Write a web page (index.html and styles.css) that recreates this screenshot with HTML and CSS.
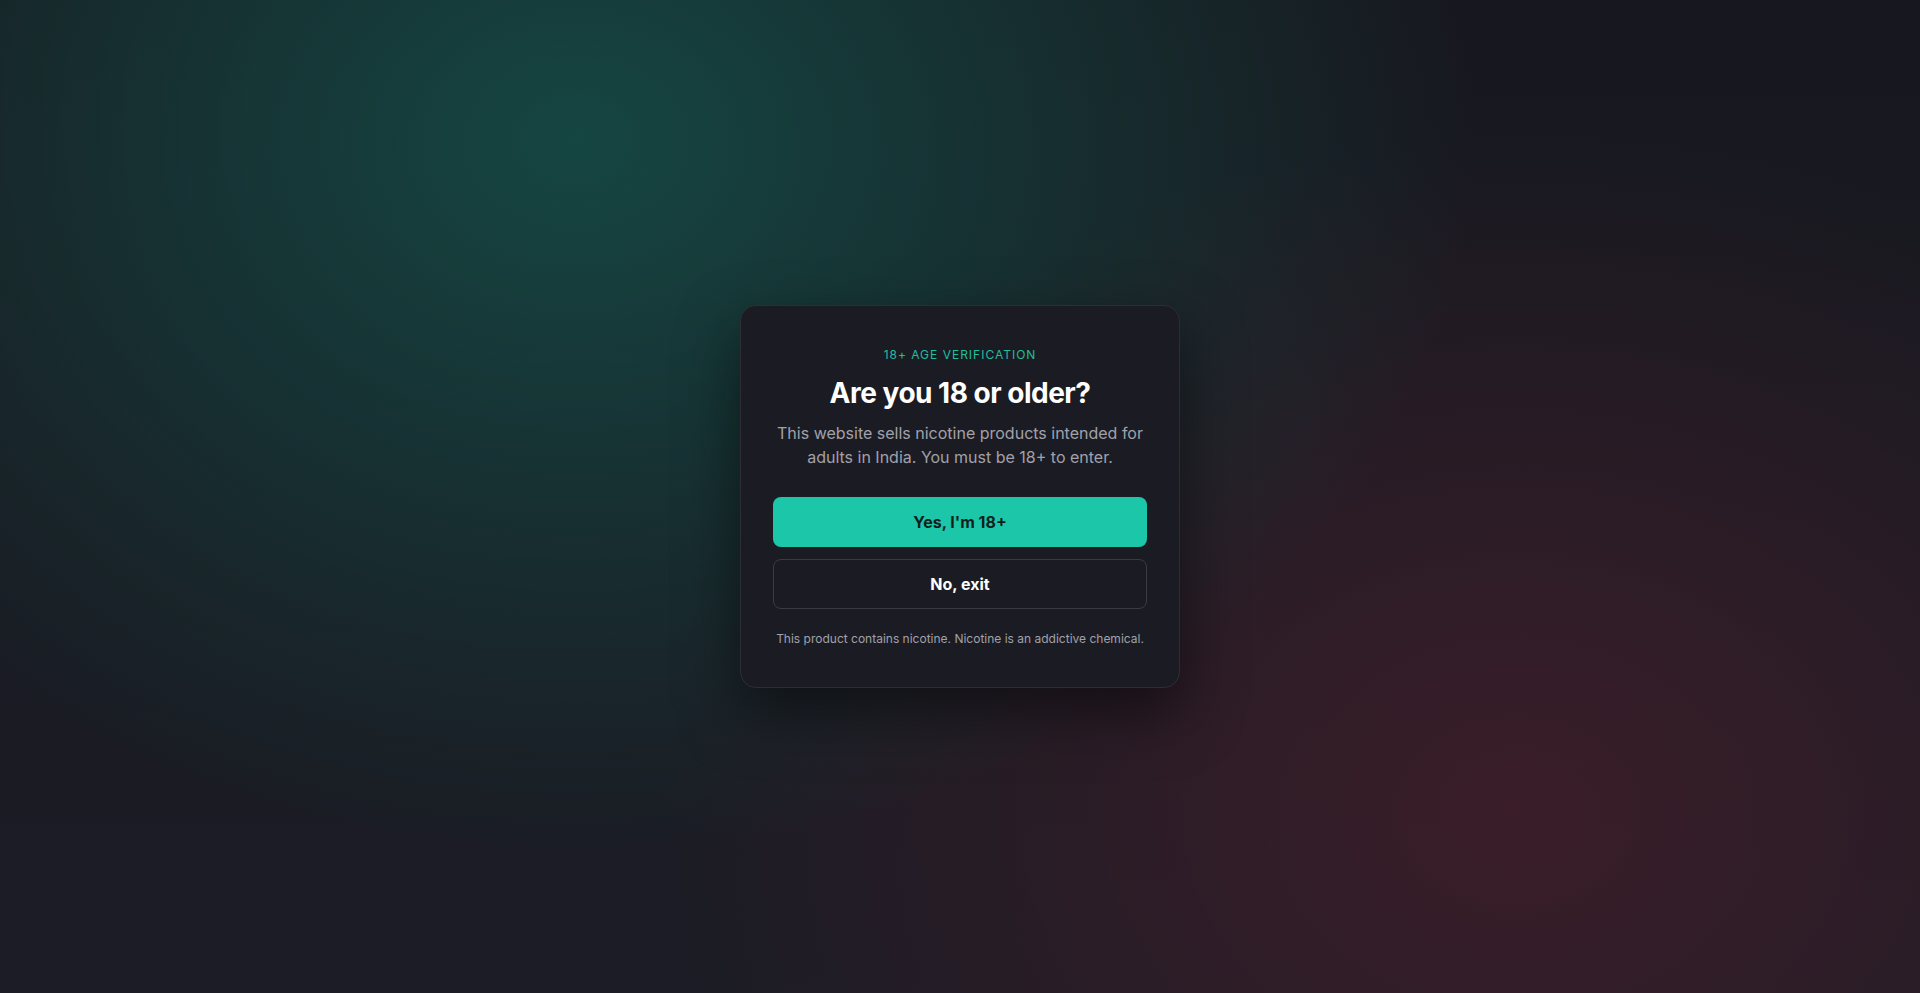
FILE: index.html
```html
<!DOCTYPE html>
<html lang="en">
<head>
<meta charset="utf-8">
<title>Age Verification</title>
<link rel="stylesheet" href="styles.css">
</head>
<body>
<main class="overlay">
  <section class="card">
    <p class="eyebrow">18+ AGE VERIFICATION</p>
    <h1 class="title">Are you 18 or older?</h1>
    <p class="lead">This website sells nicotine products intended for adults in India. You must be 18+ to enter.</p>
    <div class="actions">
      <button class="btn btn-primary" type="button">Yes, I'm 18+</button>
      <button class="btn btn-ghost" type="button">No, exit</button>
    </div>
    <p class="warning">This product contains nicotine. Nicotine is an addictive chemical.</p>
  </section>
</main>
</body>
</html>
```

FILE: styles.css
```css
* { box-sizing: border-box; }
html, body { height: 100%; }
body {
  margin: 0;
  font-family: Inter, "Noto Sans", sans-serif;
  color: #f4f4f5;
  background-color: #181922;
  background-image:
    radial-gradient(ellipse 1250px 1000px at 30% 14%, rgba(21, 78, 72, 0.85), rgba(21, 78, 72, 0) 72%),
    radial-gradient(ellipse 1200px 950px at 79% 82%, rgba(64, 30, 42, 0.85), rgba(64, 30, 42, 0) 72%),
    linear-gradient(180deg, #17181f, #1b1c25);
}
.overlay {
  min-height: 100vh;
  display: flex;
  align-items: center;
  justify-content: center;
}
.card {
  width: 440px;
  padding: 40px 32px 39px;
  background: #1b1c23;
  border: 1px solid #2c2d35;
  border-radius: 16px;
  box-shadow: 0 24px 60px rgba(0, 0, 0, 0.5);
  text-align: center;
}
.eyebrow {
  margin: 0;
  font-size: 12px;
  line-height: 18px;
  letter-spacing: 1px;
  color: #1fbf9f;
}
.title {
  margin: 12px 0 0;
  font-size: 28px;
  line-height: 34px;
  font-weight: 700;
  letter-spacing: -0.5px;
  color: #ffffff;
}
.lead {
  margin: 11px 0 0;
  font-size: 16px;
  line-height: 24px;
  color: #a1a1aa;
}
.actions {
  margin-top: 28px;
  display: flex;
  flex-direction: column;
  gap: 12px;
}
.btn {
  height: 50px;
  border-radius: 8px;
  font-family: Inter, "Noto Sans", sans-serif;
  font-size: 16px;
  font-weight: 700;
  cursor: pointer;
}
.btn-primary {
  background: #1bc6a9;
  border: none;
  color: #0f1f1c;
}
.btn-ghost {
  background: #1b1c23;
  border: 1px solid #3a3b43;
  color: #ffffff;
}
.warning {
  margin: 21px 0 0;
  font-size: 12px;
  line-height: 18px;
  color: #a1a1aa;
}
```
